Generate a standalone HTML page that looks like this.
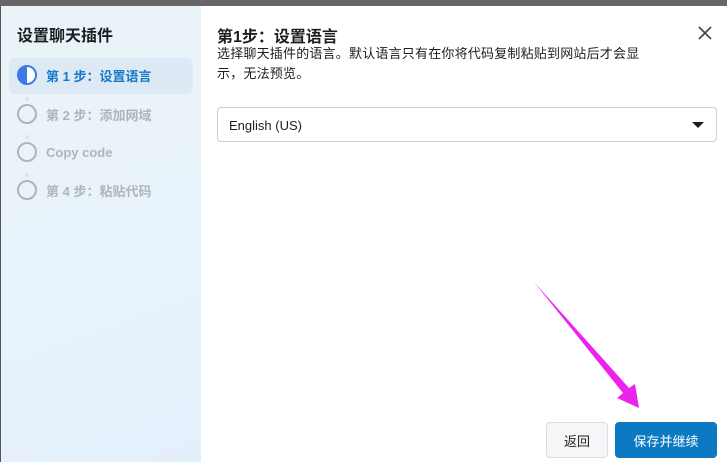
<!DOCTYPE html>
<html><head><meta charset="utf-8"><style>
*{margin:0;padding:0;box-sizing:border-box}
body{width:727px;height:462px;overflow:hidden;background:#fff;font-family:"Liberation Sans","Noto Sans CJK SC",sans-serif;position:relative}
.top{position:absolute;left:0;top:0;width:727px;height:6px;background:#666568}
.left{position:absolute;left:0;top:6px;width:201px;height:456px;background:linear-gradient(160deg,#eaf4f8 0%,#e8f2fa 60%,#e3effb 100%);border-left:1px solid #555}
.title{position:absolute;left:17px;top:22px;font-size:16px;font-weight:bold;color:#1c1e21}
.sel{position:absolute;left:9px;top:58px;width:184px;height:36px;background:#dde9f5;border-radius:6px}
.step{position:absolute;left:17px;font-size:13px;font-weight:bold;color:#b0b5bb;display:flex;align-items:center}
.step .c{width:20px;height:20px;border:2px solid #b0b5bb;border-radius:50%;margin-right:9px}
.dot{position:absolute;left:25px;width:4px;height:4px;border-radius:50%;background:#dde3ea}
.right{position:absolute;left:201px;top:6px;width:526px;height:456px;background:#fff;border-top-left-radius:4px}
h2{position:absolute;left:217px;top:23px;font-size:16px;font-weight:bold;color:#1c1e21}
.desc{position:absolute;left:217px;top:44px;font-size:13px;letter-spacing:0.2px;line-height:20px;color:#1c1e21;white-space:nowrap}
.selbox{position:absolute;left:217px;top:107px;width:500px;height:35px;border:1px solid #ccd0d5;border-radius:4px;font-size:13px;color:#1c1e21;padding:10px 11px}
.tri{position:absolute;right:12px;top:14px;width:0;height:0;border-left:6px solid transparent;border-right:6px solid transparent;border-top:6px solid #1c1e21}
.btn{position:absolute;top:422px;height:36px;border-radius:4px;font-size:13px;display:flex;align-items:center;justify-content:center}
</style></head><body>
<div class="top"></div>
<div class="left"></div>
<div class="title">设置聊天插件</div>
<div class="sel"></div>
<div class="step" style="top:65px;color:#1877c9"><svg width="20" height="20" style="margin-right:9px"><circle cx="10" cy="10" r="9" fill="#fff" stroke="#3b7be8" stroke-width="2"/><path d="M10 1 A9 9 0 0 0 10 19 Z" fill="#3b7be8"/></svg>第 1 步：设置语言</div>
<div class="dot" style="top:97px"></div><div class="dot" style="top:135px"></div><div class="dot" style="top:173px"></div>
<div class="step" style="top:104px"><div class="c"></div>第 2 步：添加网域</div>
<div class="step" style="top:142px"><div class="c"></div>Copy code</div>
<div class="step" style="top:180px"><div class="c"></div>第 4 步：粘贴代码</div>
<div class="right"></div>
<h2>第1步：设置语言</h2>
<div class="desc">选择聊天插件的语言。默认语言只有在你将代码复制粘贴到网站后才会显<br>示，无法预览。</div>
<div class="selbox">English (US)<div class="tri"></div></div>
<svg style="position:absolute;left:698px;top:26px" width="14" height="14"><path d="M1 1L13 13M13 1L1 13" stroke="#444" stroke-width="1.6"/></svg>
<div class="btn" style="left:546px;width:62px;background:#f5f6f7;border:1px solid #dadde1;color:#1c1e21">返回</div>
<div class="btn" style="left:615px;width:102px;background:#0b7ac2;color:#fff">保存并继续</div>
<svg style="position:absolute;left:0;top:0" width="727" height="462"><polygon points="534,282 629,388 635,384 639,408 617,398 623,393" fill="#ee22ee"/></svg>
</body></html>
